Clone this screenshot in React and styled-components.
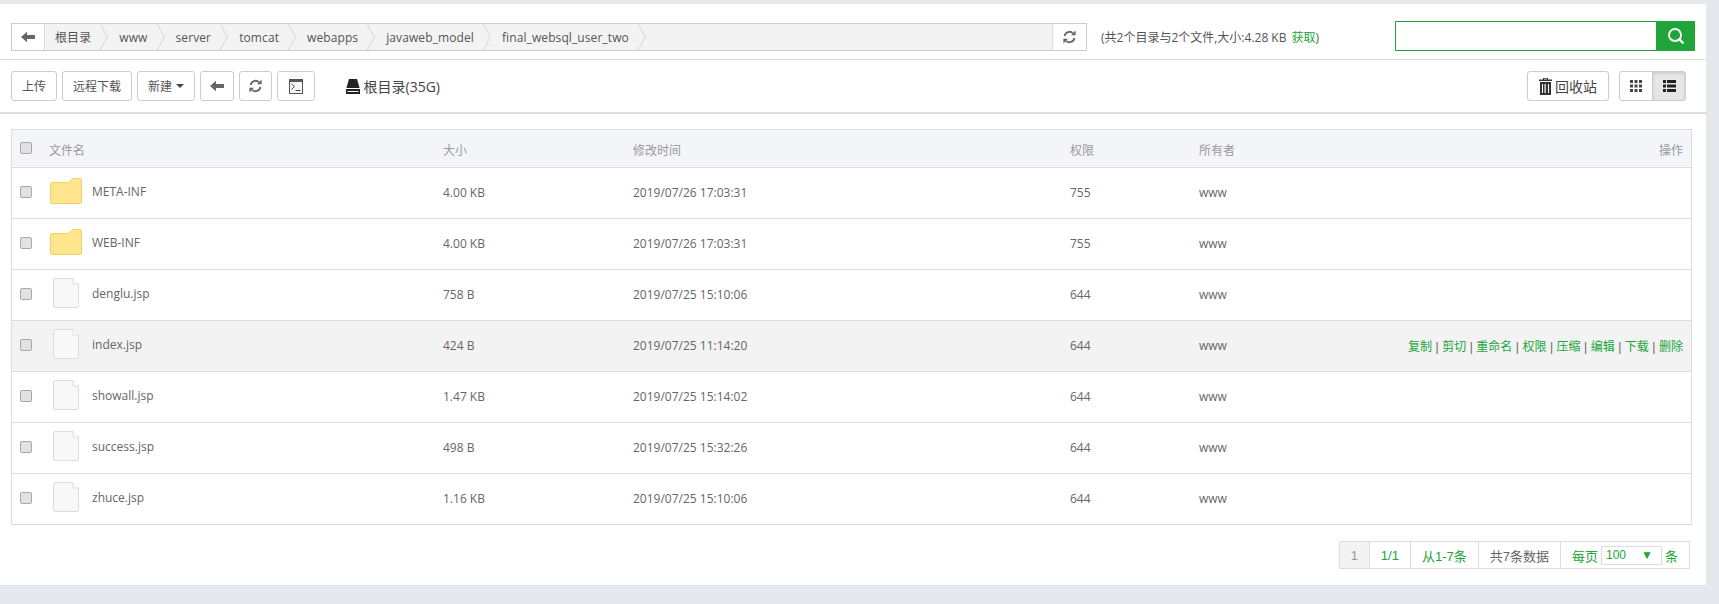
import React from 'react';
import styled, {createGlobalStyle} from 'styled-components';

const files = [
    {name: 'META-INF', size: '4.00 KB', time: '2019/07/26 17:03:31', perm: '755', dir: true},
    {name: 'WEB-INF', size: '4.00 KB', time: '2019/07/26 17:03:31', perm: '755', dir: true},
    {name: 'denglu.jsp', size: '758 B', time: '2019/07/25 15:10:06', perm: '644'},
    {name: 'index.jsp', size: '424 B', time: '2019/07/25 11:14:20', perm: '644', active: true},
    {name: 'showall.jsp', size: '1.47 KB', time: '2019/07/25 15:14:02', perm: '644'},
    {name: 'success.jsp', size: '498 B', time: '2019/07/25 15:32:26', perm: '644'},
    {name: 'zhuce.jsp', size: '1.16 KB', time: '2019/07/25 15:10:06', perm: '644'},
];
const crumbs = ['根目录', 'www', 'server', 'tomcat', 'webapps', 'javaweb_model', 'final_websql_user_two'];
const actions = ['复制', '剪切', '重命名', '权限', '压缩', '编辑', '下载', '删除'];

//Icons
const ArrowLeft = () => (
    <svg width="14" height="12" viewBox="0 0 14 12"><path d="M0 6 6 .8V4h8v4H6v3.2z" fill="#666" /></svg>
);
const Refresh = () => (
    <svg width="13" height="14" viewBox="0 0 13 14" fill="none">
        <path d="M1.6 6A5 5 0 0 1 10 3.2" stroke="#666" strokeWidth="1.8" />
        <path d="M12.6.6v4.6H8z" fill="#666" />
        <path d="M11.4 8A5 5 0 0 1 3 10.8" stroke="#666" strokeWidth="1.8" />
        <path d="M.4 13.4V8.8H5z" fill="#666" />
    </svg>
);
const Terminal = () => (
    <svg width="14" height="15" viewBox="0 0 14 15" fill="none">
        <rect x=".5" y=".5" width="13" height="14" fill="#f7f7f7" stroke="#555" />
        <rect x="0" y="0" width="14" height="3" fill="#555" />
        <path d="M2.5 5 5.500 7.500l-3 3M6.500 11.500h5" stroke="#444" />
    </svg>
);
const Hdd = () => (
    <svg width="14" height="15" viewBox="0 0 14 15">
        <path d="M3 0h8l2.600 9H.4z" fill="#222" />
        <path d="M0 10h14v5H0z" fill="#222" />
        <path d="M1.500 12h11v1h-11z" fill="#fff" />
    </svg>
);
const Trash = () => (
    <svg width="13" height="17" viewBox="0 0 13 17">
        <path d="M4 0h5v1.500h4V3H0V1.500h4zM5 .8v.7h3V.8z" fill="#333" fillRule="evenodd" />
        <path d="M1 4h11v13H1zM3 6v9h1V6zm2.500 0v9h1.200V6zM9 6v9h1V6z" fill="#333" fillRule="evenodd" />
    </svg>
);
const Grid = () => (
    <svg width="12" height="12" viewBox="0 0 12 12" fill="#444">
        {[0, 4.500, 9].map(y => [0, 4.500, 9].map(x => <rect key={`${x}-${y}`} x={x} y={y} width="3" height="3" />))}
    </svg>
);
const List = () => (
    <svg width="13" height="12" viewBox="0 0 13 12" fill="#222">
        {[0, 4.500, 9].map(y => (
            <g key={y}>
                <rect x="0" y={y} width="3" height="3" />
                <rect x="4" y={y} width="9" height="3" />
            </g>
        ))}
    </svg>
);
const Search = () => (
    <svg width="18" height="18" viewBox="0 0 18 18" fill="none">
        <circle cx="8" cy="8" r="6" stroke="#fff" strokeWidth="1.800" />
        <path d="m12.500 12.500 4 4" stroke="#fff" strokeWidth="2.200" />
    </svg>
);
const Folder = () => (
    <svg width="32" height="26" viewBox="0 0 32 26">
        <path d="M.5 6a1.500 1.500 0 0 1 1.500-1.500h16.500L23 .5h7.500a1 1 0 0 1 1 1v23a1 1 0 0 1-1 1h-29a1 1 0 0 1-1-1z" fill="#ffe68c" stroke="#f5cf6c" strokeLinejoin="round" />
    </svg>
);
const FileIcon = () => (
    <svg width="26" height="30" viewBox="0 0 26 30">
        <path d="M1.500.5H20L25.500 6v22a1.500 1.500 0 0 1-1.500 1.500H2A1.500 1.500 0 0 1 .5 28V2A1.500 1.500 0 0 1 1.500.5z" fill="#f8f8f8" stroke="#ddd" />
        <path d="M20 .5V6h5.500" fill="#fff" stroke="#ddd" />
    </svg>
);

const FileManager = () => {
    return (
        <Panel>
            <GlobalStyle />
            <TopBar>
                <PathBar>
                    <BackCell><ArrowLeft /></BackCell>
                    <Crumbs>
                        {crumbs.map((c) => <Crumb key={c}>{c}</Crumb>)}
                    </Crumbs>
                    <RefreshCell><Refresh /></RefreshCell>
                </PathBar>
                <Summary>(共2个目录与2个文件,大小:4.28 KB <Fetch>获取</Fetch>)</Summary>
                <SearchBox>
                    <SearchInput />
                    <SearchBtn><Search /></SearchBtn>
                </SearchBox>
            </TopBar>

            <Toolbar>
                <Button>上传</Button>
                <Button>远程下载</Button>
                <Button>新建<Caret /></Button>
                <IconButton><ArrowLeft /></IconButton>
                <IconButton><Refresh /></IconButton>
                <IconButton $wide><Terminal /></IconButton>
                <Disk><Hdd />根目录(35G)</Disk>
                <Recycle><Trash />回收站</Recycle>
                <Toggle>
                    <ToggleBtn><Grid /></ToggleBtn>
                    <ToggleBtn $active><List /></ToggleBtn>
                </Toggle>
            </Toolbar>

            <TableWrap>
                <Table>
                    <colgroup>
                        <col width="37" />
                        <col width="394" />
                        <col width="190" />
                        <col width="437" />
                        <col width="129" />
                        <col width="120" />
                        <col />
                    </colgroup>
                    <thead>
                        <tr>
                            <HeadCell><Check type="checkbox" /></HeadCell>
                            <HeadCell><HeadLabel>文件名</HeadLabel></HeadCell>
                            <HeadCell><HeadLabel>大小</HeadLabel></HeadCell>
                            <HeadCell><HeadLabel>修改时间</HeadLabel></HeadCell>
                            <HeadCell><HeadLabel>权限</HeadLabel></HeadCell>
                            <HeadCell><HeadLabel>所有者</HeadLabel></HeadCell>
                            <HeadCell $right><HeadLabel>操作</HeadLabel></HeadCell>
                        </tr>
                    </thead>
                    <tbody>
                        {files.map((f) => (
                            <Row key={f.name} $active={f.active}>
                                <Cell><Check type="checkbox" /></Cell>
                                <Cell>
                                    <NameWrap>
                                        <IconSlot $dir={f.dir}>{f.dir ? <Folder /> : <FileIcon />}</IconSlot>
                                        <FileName>{f.name}</FileName>
                                    </NameWrap>
                                </Cell>
                                <Cell>{f.size}</Cell>
                                <Cell>{f.time}</Cell>
                                <Cell>{f.perm}</Cell>
                                <Cell>www</Cell>
                                <Cell $right>
                                    {f.active && actions.map((a, i) => (
                                        <React.Fragment key={a}>
                                            {i > 0 && <Sep>|</Sep>}
                                            <Action>{a}</Action>
                                        </React.Fragment>
                                    ))}
                                </Cell>
                            </Row>
                        ))}
                    </tbody>
                </Table>
            </TableWrap>

            <Pager>
                <PageItem $current>1</PageItem>
                <PageItem $green>1/1</PageItem>
                <PageItem $green>从1-7条</PageItem>
                <PageItem>共7条数据</PageItem>
                <PageItem $green>
                    每页
                    <PageSelect>100<span>▼</span></PageSelect>
                    条
                </PageItem>
            </Pager>
        </Panel>
    );
};

const GlobalStyle = createGlobalStyle`
    html, body {
        margin: 0;
        height: 100%;
        overflow: hidden;
        background: #e5e8ed;
    }
    body {
        font-family: "Open Sans", "Noto Sans CJK SC", sans-serif;
        font-size: 12px;
        color: #666;
    }
`;

const Panel = styled.div`
    width: 1706px;
    height: 581px;
    margin-top: 4px;
    background: #fff;
`;

const TopBar = styled.div`
    display: flex;
    align-items: center;
    height: 56px;
    padding: 12px 11px 0;
    box-sizing: border-box;
    border-bottom: 1px solid #ddd;
`;

const PathBar = styled.div`
    display: flex;
    width: 1076px;
    height: 28px;
    margin-top: -1px;
    box-sizing: border-box;
    border: 1px solid #ccc;
    background: #f3f3f3;
`;

const BackCell = styled.div`
    display: flex;
    align-items: center;
    justify-content: center;
    width: 32px;
    background: #fff;
    border-right: 1px solid #ddd;
`;

const Crumbs = styled.div`
    display: flex;
    flex: 1;
    overflow: hidden;
`;

const Crumb = styled.div`
    position: relative;
    display: flex;
    align-items: center;
    padding: 0 18px 0 10px;
    font-size: 12px;
    letter-spacing: 0.1px;
    color: #555;

    &::after {
        content: "";
        position: absolute;
        top: 3px;
        right: -1px;
        width: 20px;
        height: 20px;
        box-sizing: border-box;
        border-top: 1px solid #d0d0d0;
        border-right: 1px solid #d0d0d0;
        transform: scaleX(0.55) rotate(45deg);
    }
`;

const RefreshCell = styled.div`
    display: flex;
    align-items: center;
    justify-content: center;
    width: 33px;
    background: #fff;
    border-left: 1px solid #ddd;
`;

const Summary = styled.div`
    margin-left: 14px;
    margin-top: -1px;
    font-size: 12px;
    color: #555;
    white-space: nowrap;
`;

const Fetch = styled.a`
    margin-left: 2px;
    color: #20a53a;
`;

const SearchBox = styled.div`
    display: flex;
    width: 300px;
    height: 30px;
    margin-left: auto;
    margin-top: -3px;
`;

const SearchInput = styled.input`
    flex: 1;
    min-width: 0;
    box-sizing: border-box;
    border: 1px solid #20a53a;
    border-right: 0;
    outline: none;
`;

const SearchBtn = styled.div`
    display: flex;
    align-items: center;
    justify-content: center;
    width: 39px;
    background: #20a53a;
`;

const Toolbar = styled.div`
    display: flex;
    align-items: center;
    gap: 5px;
    height: 54px;
    padding: 0 20px 0 11px;
    box-sizing: border-box;
    border-bottom: 2px solid #ddd;
`;

const Button = styled.button`
    display: flex;
    align-items: center;
    justify-content: center;
    height: 30px;
    padding: 0 10px;
    border: 1px solid #ccc;
    border-radius: 3px;
    background: #fff;
    font: inherit;
    color: #555;
`;

const Caret = styled.span`
    width: 0;
    height: 0;
    margin-left: 4px;
    border-top: 4px solid #444;
    border-left: 4px solid transparent;
    border-right: 4px solid transparent;
`;

const IconButton = styled(Button)`
    width: ${(p) => (p.$wide ? '37.5px' : '33.5px')};
    padding: 0;
`;

const Disk = styled.div`
    display: flex;
    align-items: center;
    gap: 4px;
    margin-left: 26px;
    font-size: 14px;
    color: #444;
`;

const Recycle = styled(Button)`
    gap: 3px;
    width: 82px;
    margin-left: auto;
    padding: 0;
    font-size: 14px;
    color: #444;
`;

const Toggle = styled.div`
    display: flex;
    margin-left: 5px;
`;

const ToggleBtn = styled.button`
    display: flex;
    align-items: center;
    justify-content: center;
    width: 34px;
    height: 30px;
    padding: 0;
    border: 1px solid #ccc;
    background: ${(p) => (p.$active ? '#e6e6e6' : '#fff')};
    border-radius: ${(p) => (p.$active ? '0 3px 3px 0' : '3px 0 0 3px')};
    margin-left: ${(p) => (p.$active ? '-1px' : '0')};
    box-shadow: ${(p) => (p.$active ? 'inset 0 1px 3px rgba(0,0,0,.15)' : 'none')};
`;

const TableWrap = styled.div`
    width: 1681px;
    margin: 15px 0 0 11px;
    box-sizing: border-box;
    border: 1px solid #ddd;
`;

const Table = styled.table`
    width: 100%;
    table-layout: fixed;
    border-collapse: collapse;
`;

const HeadCell = styled.th`
    height: 37px;
    padding: ${(p) => (p.$right ? '0 8px 0 0' : '0')};
    box-sizing: border-box;
    background: #f4f5f9;
    border-bottom: 1px solid #ddd;
    font-weight: normal;
    text-align: ${(p) => (p.$right ? 'right' : 'left')};
    color: #999;
    line-height: 1;

    input { margin-top: 1px; }
`;

const HeadLabel = styled.span`
    display: inline-block;
    padding-top: 6px;
`;

const Row = styled.tr`
    background: ${(p) => (p.$active ? '#f3f3f3' : '#fff')};
    &:not(:last-child) td {
        border-bottom: 1px solid #ddd;
    }
`;

const Cell = styled.td`
    height: 51px;
    padding: ${(p) => (p.$right ? '0 8px 0 0' : '0')};
    box-sizing: border-box;
    text-align: ${(p) => (p.$right ? 'right' : 'left')};
    color: #666;
    white-space: nowrap;
`;

const Check = styled.input`
    appearance: none;
    display: block;
    width: 12px;
    height: 12px;
    margin: 0 0 2px 8px;
    border: 1px solid #a8a8a8;
    border-radius: 2px;
    background: #e2e2e2;
`;

const NameWrap = styled.div`
    display: flex;
    align-items: center;
`;

const IconSlot = styled.div`
    display: flex;
    width: ${(p) => (p.$dir ? '42px' : '39px')};
    padding-left: ${(p) => (p.$dir ? '1px' : '4px')};
    margin-bottom: 3px;
    svg { display: block; }
`;

const FileName = styled.span`
    position: relative;
    top: -1px;
    color: #666;
`;

const Action = styled.a`
    color: #20a53a;
`;

const Sep = styled.span`
    margin: 0 3.500px;
    font-family: "Liberation Sans", sans-serif;
`;

const Pager = styled.div`
    display: flex;
    justify-content: flex-end;
    margin: 16px 16px 0 0;
    font-family: "Liberation Sans", "Noto Sans CJK SC", sans-serif;
    font-size: 13px;
`;

const PageItem = styled.div`
    display: flex;
    align-items: center;
    height: 28px;
    padding: 0 11px;
    box-sizing: border-box;
    border: 1px solid #ddd;
    margin-left: -1px;
    background: ${(p) => (p.$current ? '#f3f3f3' : '#fff')};
    color: ${(p) => (p.$current ? '#999' : p.$green ? '#20a53a' : '#666')};
`;

const PageSelect = styled.div`
    display: flex;
    align-items: center;
    justify-content: space-between;
    width: 61px;
    height: 19px;
    margin: 0 3px;
    padding: 0 8px 0 4px;
    box-sizing: border-box;
    border: 1px solid #ddd;
    font-size: 12px;
    span { font-size: 12px; }
`;

export default FileManager;
